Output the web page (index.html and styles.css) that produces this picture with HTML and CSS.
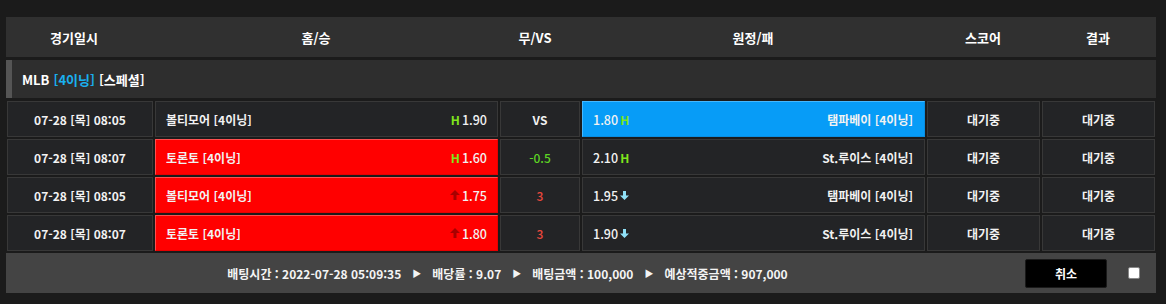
FILE: index.html
```html
<!DOCTYPE html>
<html lang="ko">
<head>
<meta charset="utf-8">
<link rel="stylesheet" href="styles.css">
</head>
<body>
<div class="wrap">
  <div class="head">
    <div>경기일시</div>
    <div>홈/승</div>
    <div>무/VS</div>
    <div>원정/패</div>
    <div>스코어</div>
    <div>결과</div>
  </div>

  <div class="league">MLB <span class="blue">[4이닝]</span> [스페셜]</div>

  <div class="rows">
    <div class="row">
      <div class="cell">07-28 [목] 08:05</div>
      <div class="cell pick home"><span class="team">볼티모어 [4이닝]</span><span class="odds"><b class="h">H</b>1.90</span></div>
      <div class="cell">VS</div>
      <div class="cell pick away sel-blue"><span class="odds">1.80<b class="h">H</b></span><span class="team">탬파베이 [4이닝]</span></div>
      <div class="cell">대기중</div>
      <div class="cell">대기중</div>
    </div>
    <div class="row">
      <div class="cell">07-28 [목] 08:07</div>
      <div class="cell pick home sel-red"><span class="team">토론토 [4이닝]</span><span class="odds"><b class="h">H</b>1.60</span></div>
      <div class="cell green">-0.5</div>
      <div class="cell pick away"><span class="odds">2.10<b class="h">H</b></span><span class="team">St.루이스 [4이닝]</span></div>
      <div class="cell">대기중</div>
      <div class="cell">대기중</div>
    </div>
    <div class="row">
      <div class="cell">07-28 [목] 08:05</div>
      <div class="cell pick home sel-red"><span class="team">볼티모어 [4이닝]</span><span class="odds"><svg class="arr" width="10" height="10" viewBox="0 0 10 10"><path d="M5 0 L10 5 H6.5 V10 H3.5 V5 H0 Z" fill="#a80000"/></svg>1.75</span></div>
      <div class="cell red">3</div>
      <div class="cell pick away"><span class="odds">1.95<svg class="arr" width="9" height="9" viewBox="0 0 9 9"><path d="M3 0 H6 V4.5 H9 L4.5 9 L0 4.5 H3 Z" fill="#8fe0f6"/></svg></span><span class="team">탬파베이 [4이닝]</span></div>
      <div class="cell">대기중</div>
      <div class="cell">대기중</div>
    </div>
    <div class="row">
      <div class="cell">07-28 [목] 08:07</div>
      <div class="cell pick home sel-red"><span class="team">토론토 [4이닝]</span><span class="odds"><svg class="arr" width="10" height="10" viewBox="0 0 10 10"><path d="M5 0 L10 5 H6.5 V10 H3.5 V5 H0 Z" fill="#a80000"/></svg>1.80</span></div>
      <div class="cell red">3</div>
      <div class="cell pick away"><span class="odds">1.90<svg class="arr" width="9" height="9" viewBox="0 0 9 9"><path d="M3 0 H6 V4.5 H9 L4.5 9 L0 4.5 H3 Z" fill="#8fe0f6"/></svg></span><span class="team">St.루이스 [4이닝]</span></div>
      <div class="cell">대기중</div>
      <div class="cell">대기중</div>
    </div>
  </div>

  <div class="foot">
    <div class="summary">
      <span>배팅시간 : 2022-07-28 05:09:35</span>
      <span class="tri">▶</span>
      <span>배당률 : 9.07</span>
      <span class="tri">▶</span>
      <span>배팅금액 : 100,000</span>
      <span class="tri">▶</span>
      <span>예상적중금액 : 907,000</span>
    </div>
    <button class="cancel">취소</button>
    <span class="check"></span>
  </div>
</div>
</body>
</html>
```

FILE: styles.css
```css
* { box-sizing: border-box; }
html, body {
  margin: 0;
  background: #1b1b1b;
}
body {
  font-family: "Noto Sans CJK KR", "Noto Sans", sans-serif;
  color: #fff;
}
.wrap {
  width: 1150px;
  margin-left: 6px;
  padding-top: 17px;
}
.head {
  display: grid;
  grid-template-columns: 136px 348px 90px 346px 114px 116px;
  height: 40px;
  background: #303030;
  font-size: 13px;
  font-weight: 700;
}
.head > div {
  display: flex;
  align-items: center;
  justify-content: center;
}
.league {
  margin-top: 3px;
  height: 38px;
  background: #2e2e2e;
  border-left: 6px solid #555;
  display: flex;
  align-items: center;
  gap: 4px;
  padding-left: 10px;
  font-size: 13px;
  font-weight: 700;
}
.league .blue { color: #1ab0ef; }
.rows {
  margin-top: 3px;
  padding-left: 1px;
  display: flex;
  flex-direction: column;
  gap: 2px;
}
.row {
  display: grid;
  grid-template-columns: 146px 343px 80px 343px 113px 113px;
  gap: 2px;
  height: 36px;
}
.cell {
  background: #232426;
  border: 1px solid #383838;
  display: flex;
  align-items: center;
  justify-content: center;
  font-size: 12px;
  font-weight: 700;
  color: #f2f2f2;
}
.cell.green { color: #5ed424; font-weight: 500; }
.cell.red { color: #e8473c; font-weight: 500; }
.pick {
  justify-content: space-between;
  padding: 0 10px;
}
.pick.away { padding-right: 11px; }
.sel-red {
  background: #ff0000;
  border-color: #ff5050 #e80000 #e80000 #ff5050;
}
.sel-blue {
  background: #079cf7;
  border-color: #45b8ff #0a8ee0 #0a8ee0 #45b8ff;
}
.odds {
  display: flex;
  align-items: center;
  gap: 2px;
  font-size: 12.5px;
  font-weight: 500;
}
.h {
  color: #80e51c;
  font-weight: 700;
  font-size: 12px;
}
.arr { display: block; }
.foot {
  margin-top: 2px;
  height: 40px;
  background: #444;
  display: flex;
  align-items: center;
  padding-right: 16px;
}
.summary {
  flex: 1;
  display: flex;
  justify-content: center;
  align-items: center;
  gap: 11px;
  font-size: 12px;
  font-weight: 700;
  color: #f4f4f4;
  margin-right: 16px;
}
.tri { font-size: 9px; }
.cancel {
  width: 82px;
  height: 29px;
  background: #000;
  border: 1px solid #1a1a1a;
  border-radius: 2px;
  color: #fff;
  font-family: inherit;
  font-size: 12px;
  font-weight: 700;
  padding: 0;
}
.check {
  width: 12px;
  height: 12px;
  margin-left: 21px;
  background: #fff;
  border: 1px solid #888;
  border-radius: 2px;
}
```
